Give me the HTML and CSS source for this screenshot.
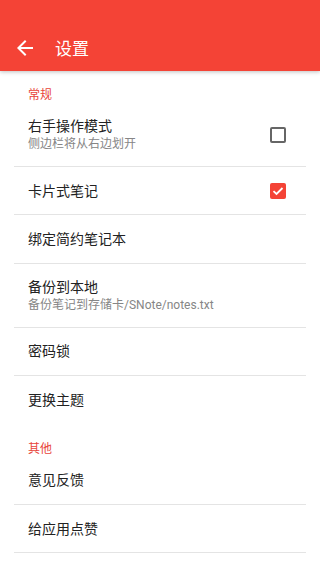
FILE: index.html
```html
<!DOCTYPE html>
<html lang="zh-CN">
<head>
  <meta charset="UTF-8">
  <meta name="viewport" content="width=device-width, initial-scale=1.0">
  <title>设置</title>
  <link rel="stylesheet" href="styles.css">
</head>
<body>

  <header class="toolbar">
    <svg class="back" width="24" height="24" viewBox="0 0 24 24">
      <path d="M20 11H7.83l5.59-5.59L12 4l-8 8 8 8 1.41-1.41L7.83 13H20v-2z" fill="#fff"/>
    </svg>
    <h1>设置</h1>
  </header>

  <main>
    <p class="category">常规</p>

    <div class="row tall">
      <div class="text">
        <p class="title">右手操作模式</p>
        <p class="summary">侧边栏将从右边划开</p>
      </div>
      <span class="checkbox"></span>
    </div>

    <div class="row">
      <div class="text">
        <p class="title">卡片式笔记</p>
      </div>
      <span class="checkbox checked">
        <svg width="16" height="16" viewBox="0 0 16 16">
          <path d="M3.5 8.2l3 2.8 6-6" fill="none" stroke="#fff" stroke-width="1.8"/>
        </svg>
      </span>
    </div>

    <div class="row">
      <div class="text"><p class="title">绑定简约笔记本</p></div>
    </div>

    <div class="row tall">
      <div class="text">
        <p class="title">备份到本地</p>
        <p class="summary">备份笔记到存储卡/SNote/notes.txt</p>
      </div>
    </div>

    <div class="row">
      <div class="text"><p class="title">密码锁</p></div>
    </div>

    <div class="row last">
      <div class="text"><p class="title">更换主题</p></div>
    </div>

    <p class="category">其他</p>

    <div class="row">
      <div class="text"><p class="title">意见反馈</p></div>
    </div>

    <div class="row">
      <div class="text"><p class="title">给应用点赞</p></div>
    </div>
  </main>

</body>
</html>
```

FILE: styles.css
```css
body {
  margin: 0;
  background-color: #fff;
  font-family: Roboto, "Noto Sans CJK SC", sans-serif;
  color: #212121;
}
p {
  margin: 0;
}
.toolbar {
  height: 47px;
  padding-top: 24px;
  background-color: #f44336;
  display: flex;
  align-items: center;
  box-shadow: 0 1px 4px rgba(0, 0, 0, 0.25);
  position: relative;
}
.back {
  margin-left: 13px;
}
.toolbar h1 {
  margin: 0 0 0 18px;
  font-size: 17px;
  font-weight: normal;
  color: #fff;
}
.category {
  padding: 16px 0 0 28px;
  height: 16px;
  line-height: 16px;
  font-size: 12px;
  color: #e8453a;
}
.row {
  margin: 0 14px;
  padding: 0 20px 0 14px;
  height: 47.4px;
  border-bottom: 1px solid #e4e4e4;
  display: flex;
  align-items: center;
}
.row.tall {
  height: 63px;
}
.row.last {
  border-bottom: none;
  height: 48.4px;
}
.text {
  flex: 1;
}
.title {
  font-size: 14px;
  line-height: 20px;
  color: #222;
}
.summary {
  font-size: 12px;
  line-height: 17px;
  color: #868686;
}
.checkbox {
  width: 12px;
  height: 12px;
  border: 2px solid #666;
  border-radius: 2px;
  display: flex;
}
.checkbox.checked {
  width: 16px;
  height: 16px;
  border: none;
  background-color: #f44336;
}
```
